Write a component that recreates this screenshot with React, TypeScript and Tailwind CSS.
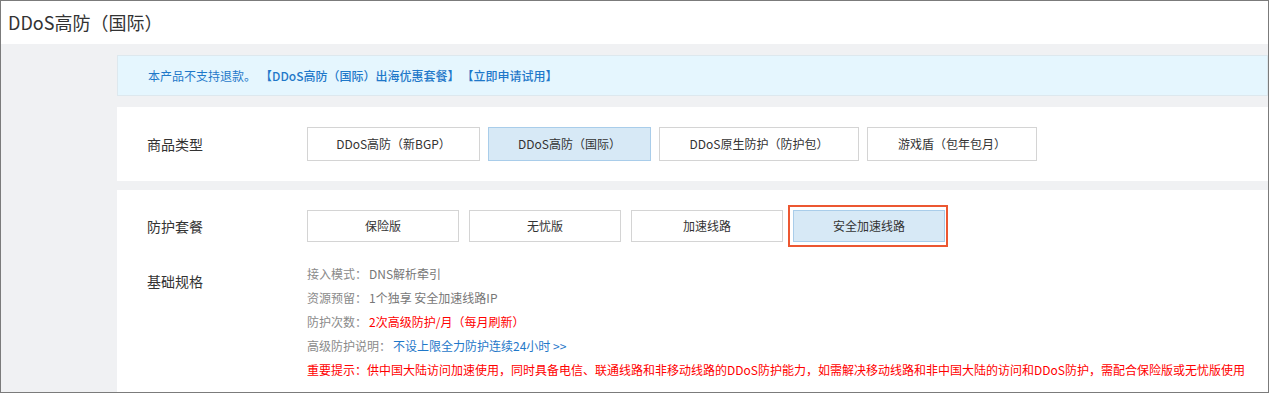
import React from "react";

const productTypes = [
  { label: "DDoS高防（新BGP）", w: "w-[173px]" },
  { label: "DDoS高防（国际）", w: "w-[163px]", active: true },
  { label: "DDoS原生防护（防护包）", w: "w-[200px]" },
  { label: "游戏盾（包年包月）", w: "w-[170px]" },
];

const plans = [
  { label: "保险版" },
  { label: "无忧版" },
  { label: "加速线路" },
  { label: "安全加速线路", active: true },
];

function OptionButton({
  label,
  active,
  className,
}: {
  label: string;
  active?: boolean;
  className: string;
}) {
  return (
    <button
      className={
        "flex items-center justify-center border text-[12px] text-[#333] " +
        className +
        (active
          ? " border-[#a9cdea] bg-[#d7e9f6]"
          : " border-[#d4d4d4] bg-white")
      }
    >
      {label}
    </button>
  );
}

export default function App() {
  return (
    <div className="w-[1269px] h-[393px] overflow-hidden border border-[#7b7b7b] bg-[#f0f1f3] font-['Noto_Sans_CJK_SC','Noto_Sans',sans-serif]">
      <div className="flex h-[43px] items-center bg-white pl-[7px] text-[18px] text-[#333]">
        DDoS高防（国际）
      </div>

      <div className="pl-[116px] pt-[11px]">
        <div className="flex h-[41px] items-center border border-[#dde8ee] bg-[#e5f6fe] pl-[30px] text-[12px] text-[#1f78c9]">
          <span>本产品不支持退款。</span>
          <span className="ml-[4px] font-medium">【DDoS高防（国际）出海优惠套餐】</span>
          <span className="ml-[2px] font-medium">【立即申请试用】</span>
        </div>

        <div className="mt-[11px] flex h-[74px] items-center bg-white pl-[30px]">
          <div className="w-[160px] text-[14px] text-[#333]">商品类型</div>
          <div className="flex gap-[8px]">
            {productTypes.map((p) => (
              <OptionButton
                key={p.label}
                label={p.label}
                active={p.active}
                className={p.w + " h-[34px]"}
              />
            ))}
          </div>
        </div>

        <div className="mt-[9px] h-[220px] bg-white pl-[30px] pt-[20px]">
          <div className="flex items-center">
            <div className="w-[160px] text-[14px] text-[#333]">防护套餐</div>
            <div className="flex gap-[10px]">
              {plans.map((p) => (
                <div key={p.label} className="relative">
                  <OptionButton
                    label={p.label}
                    active={p.active}
                    className="w-[152px] h-[32px]"
                  />
                  {p.active ? (
                    <span className="pointer-events-none absolute -left-[5px] -right-[3px] -top-[5px] -bottom-[5px] border-2 border-[#ec5731]" />
                  ) : null}
                </div>
              ))}
            </div>
          </div>

          <div className="mt-[20px] flex items-start">
            <div className="mt-[7px] w-[160px] text-[14px] leading-[24px] text-[#333]">
              基础规格
            </div>
            <div className="text-[12px] leading-[24px] text-[#8a8a8a]">
              <div>
                接入模式：<span className="ml-[2px] text-[#777]">DNS解析牵引</span>
              </div>
              <div>
                资源预留：<span className="ml-[2px] text-[#777]">1个独享 安全加速线路IP</span>
              </div>
              <div>
                防护次数：<span className="ml-[2px] text-[#ff0000]">2次高级防护/月（每月刷新）</span>
              </div>
              <div>
                高级防护说明：
                <span className="ml-[2px] text-[#1f78c9]">不设上限全力防护连续24小时 &gt;&gt;</span>
              </div>
              <div className="whitespace-nowrap text-[#ff0000]">
                重要提示：供中国大陆访问加速使用，同时具备电信、联通线路和非移动线路的DDoS防护能力，如需解决移动线路和非中国大陆的访问和DDoS防护，需配合保险版或无忧版使用
              </div>
            </div>
          </div>
        </div>
      </div>
    </div>
  );
}
